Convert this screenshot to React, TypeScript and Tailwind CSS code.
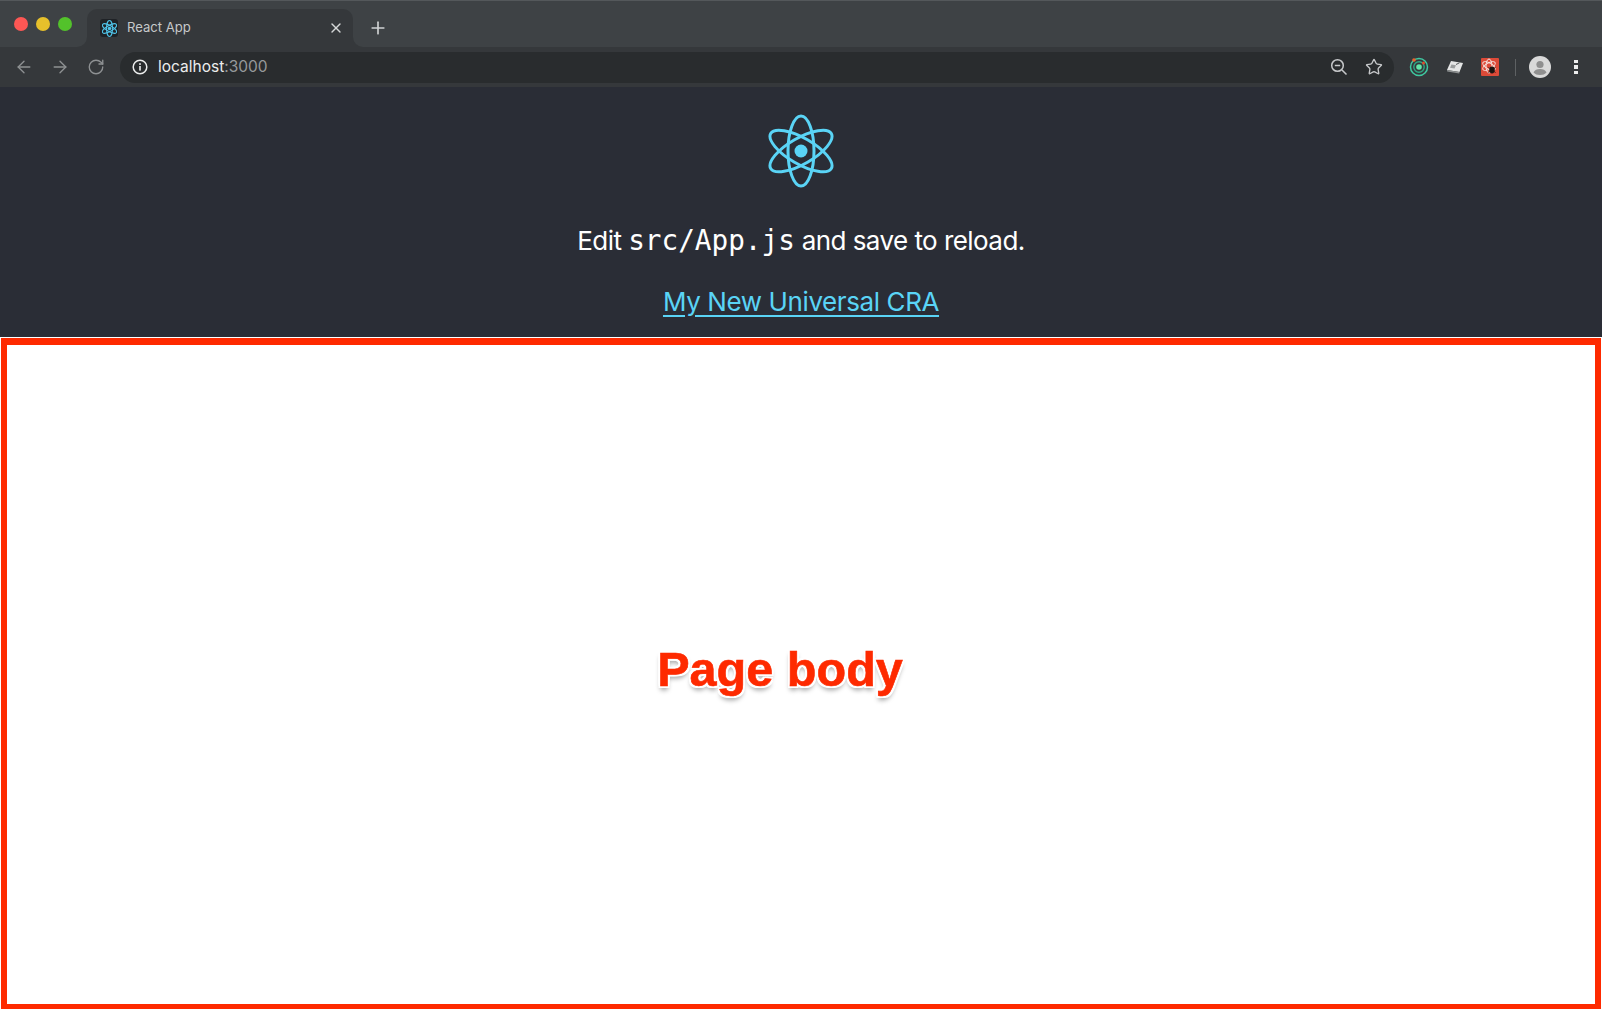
import { ArrowLeft, ArrowRight, RotateCw, Plus, X, Star } from "lucide-react";

function Atom({ size, height, color, stroke, dot }: { size: number; height: number; color: string; stroke: number; dot: number }) {
  return (
    <svg width={size} height={height} viewBox="-33 -37 66 74" fill="none" className="block">
      <g stroke={color} strokeWidth={stroke}>
        <ellipse cx="0" cy="0" rx="13" ry="35" />
        <ellipse cx="0" cy="0" rx="13" ry="35" transform="rotate(60)" />
        <ellipse cx="0" cy="0" rx="13" ry="35" transform="rotate(-60)" />
      </g>
      <circle cx="0" cy="0" r={dot} fill={color} />
    </svg>
  );
}

function Dot({ className }: { className: string }) {
  return <div className={`h-[14px] w-[14px] rounded-full ${className}`} />;
}

export default function App() {
  return (
    <div className="flex h-[1010px] w-[1602px] flex-col overflow-hidden bg-white font-['Inter','Liberation_Sans',sans-serif]">
      {/* Tab strip */}
      <div className="flex h-[47px] shrink-0 bg-[#35383b]">
        <div className="flex w-[87px] shrink-0 items-start gap-2 rounded-br-[10px] border-t border-[#54585b] bg-[#3e4245] pl-[14px] pt-[16px]">
          <Dot className="bg-[#fd5754]" />
          <Dot className="bg-[#e6c02b]" />
          <Dot className="bg-[#53c22b]" />
        </div>
        <div className="flex w-[266px] shrink-0 flex-col border-t border-[#54585b] bg-[#3e4245]">
          <div className="mt-[8px] flex h-[38px] items-center rounded-t-[10px] bg-[#35383b] pl-[13px] pr-[9px]">
            <div className="flex h-[18px] w-[18px] items-center justify-center rounded-[3px] bg-[#1f2226]">
              <Atom size={15} height={17} color="#4fc3e8" stroke={4.5} dot={8} />
            </div>
            <span className="ml-[9px] flex-1 text-[13.1px] text-[#c6c8ca]">React App</span>
            <X size={16} strokeWidth={2} className="text-[#d5d7d8]" />
          </div>
        </div>
        <div className="flex flex-1 items-center rounded-bl-[10px] border-t border-[#54585b] bg-[#3e4245] pl-[15px] pt-[8px]">
          <Plus size={20} strokeWidth={2} className="text-[#d0d2d3]" />
        </div>
      </div>

      {/* Toolbar */}
      <div className="flex h-[40px] shrink-0 items-center bg-[#35383b] pl-[14px]">
        <ArrowLeft size={20} strokeWidth={1.6} className="text-[#8e9193]" />
        <ArrowRight size={20} strokeWidth={1.6} className="ml-[16px] text-[#8e9193]" />
        <RotateCw size={18} strokeWidth={1.8} className="ml-[17px] text-[#8e9193]" />
        <div className="ml-[15px] flex h-[31px] w-[1274px] items-center rounded-full bg-[#292c2e] pl-[12px]">
          <svg width="16" height="16" viewBox="0 0 16 16" fill="none" className="shrink-0">
            <circle cx="8" cy="8" r="6.8" stroke="#eceded" strokeWidth="1.5" />
            <rect x="7.2" y="7" width="1.6" height="4.6" fill="#eceded" />
            <rect x="7.2" y="4.2" width="1.6" height="1.7" fill="#eceded" />
          </svg>
          <span className="ml-[10px] text-[15.5px] text-[#eceded]">
            localhost<span className="text-[#96999b]">:3000</span>
          </span>
          <div className="flex-1" />
          <svg width="18" height="18" viewBox="0 0 18 18" fill="none" className="translate-x-[1px]">
            <circle cx="7.5" cy="7.5" r="5.8" stroke="#c6c8ca" strokeWidth="1.5" />
            <path d="M4.8 7.5 H10.2 M12 12 L16.5 16.5" stroke="#c6c8ca" strokeWidth="1.5" />
          </svg>
          <Star size={18} strokeWidth={1.8} className="ml-[18px] mr-[11px] text-[#c6c8ca]" />
        </div>
        <div className="ml-[15px] flex items-center">
          <svg width="20" height="20" viewBox="0 0 20 20" fill="none">
            <circle cx="10" cy="10" r="8.5" stroke="#3fc8a0" strokeWidth="1.5" />
            <circle cx="10" cy="10" r="5.2" stroke="#2fa884" strokeWidth="1.4" />
            <circle cx="10" cy="10" r="2.8" fill="#62e6a8" />
            <circle cx="5" cy="3" r="1.8" fill="#e8662e" />
            <circle cx="14.5" cy="6" r="1.5" fill="#e04b2c" />
          </svg>
          <svg width="20" height="20" viewBox="0 0 20 20" fill="none" className="ml-[16px]">
            <path d="M6 4 L18 6 L14.5 15 L2 13 Z" fill="#e4e5e5" />
            <path d="M2 13 L14.5 15 L14.2 16.5 L2.2 14.5 Z" fill="#8c8f90" />
            <path d="M6.5 7.5 L11 8.3 L9.5 11.5 L5 10.7 Z" fill="#9a9d9e" />
            <path d="M11 7.5 L14.5 5.8" stroke="#55585a" strokeWidth="1" />
          </svg>
          <div className="ml-[16px] flex h-[18px] w-[18px] items-center justify-center rounded-[1px] bg-[#dc4a38]">
            <svg width="18" height="18" viewBox="0 0 18 18" fill="none">
              <g stroke="#f6e3df" strokeWidth="1">
                <ellipse cx="8" cy="8" rx="3" ry="7" />
                <ellipse cx="8" cy="8" rx="3" ry="7" transform="rotate(60 8 8)" />
                <ellipse cx="8" cy="8" rx="3" ry="7" transform="rotate(-60 8 8)" />
              </g>
              <ellipse cx="11" cy="12" rx="2.6" ry="3.4" fill="#1c1512" />
              <path d="M7.5 9.5 L14.5 14.5 M7.5 14.5 L14.5 9.5 M8 12 L14 12" stroke="#1c1512" strokeWidth="0.9" />
            </svg>
          </div>
          <div className="ml-[16px] h-[17px] w-px bg-[#5e6163]" />
          <div className="ml-[13px] flex h-[22px] w-[22px] items-center justify-center rounded-full bg-[#d9d9d9]">
            <svg width="22" height="22" viewBox="0 0 22 22">
              <circle cx="11" cy="8.5" r="3.6" fill="#8f8f8f" />
              <path d="M4.5 16.5 C5.5 13.8 8 12.9 11 12.9 C14 12.9 16.5 13.8 17.5 16.5 C16 18.2 13.8 19 11 19 C8.2 19 6 18.2 4.5 16.5 Z" fill="#8f8f8f" />
            </svg>
          </div>
          <div className="ml-[23px] flex flex-col gap-[2px]">
            <div className="h-[3.5px] w-[3.5px] bg-[#eceded]" />
            <div className="h-[3.5px] w-[3.5px] bg-[#eceded]" />
            <div className="h-[3.5px] w-[3.5px] bg-[#eceded]" />
          </div>
        </div>
      </div>

      {/* App header */}
      <header className="flex h-[250px] shrink-0 flex-col items-center bg-[#2a2d36] pt-[27px] text-[26px] leading-[33px] tracking-[-0.55px] text-white">
        <Atom size={66} height={74} color="#5ad4f6" stroke={3} dot={6.5} />
        <p className="mt-[36px]">
          Edit <code className="font-['DejaVu_Sans_Mono',monospace] text-[27.7px] tracking-normal">src/App.js</code> and save to reload.
        </p>
        <a href="#" className="mt-[28px] tracking-[-0.4px] text-[#5ad4f6] underline underline-offset-[4px]">
          My New Universal CRA
        </a>
      </header>

      {/* Page body */}
      <div className="flex flex-1 flex-col pl-[1px] pr-[1px] pb-[1px] pt-[1px]">
        <div className="flex flex-1 items-center justify-center border-[6px] border-t-[7px] border-b-[5px] border-[#fe2a00] pr-[42px] pb-[10px]">
          <span className="font-['Liberation_Sans',sans-serif] text-[48.6px] font-bold leading-none text-[#fe2a00] [-webkit-text-stroke:0.6px_#fe2a00] [text-shadow:2px_0_0_#fff,-2px_0_0_#fff,0_2px_0_#fff,0_-2px_0_#fff,2px_2px_0_#fff,-2px_2px_0_#fff,2px_-2px_0_#fff,-2px_-2px_0_#fff,0_4px_5px_rgba(0,0,0,0.4)]">
            Page body
          </span>
        </div>
      </div>
    </div>
  );
}
